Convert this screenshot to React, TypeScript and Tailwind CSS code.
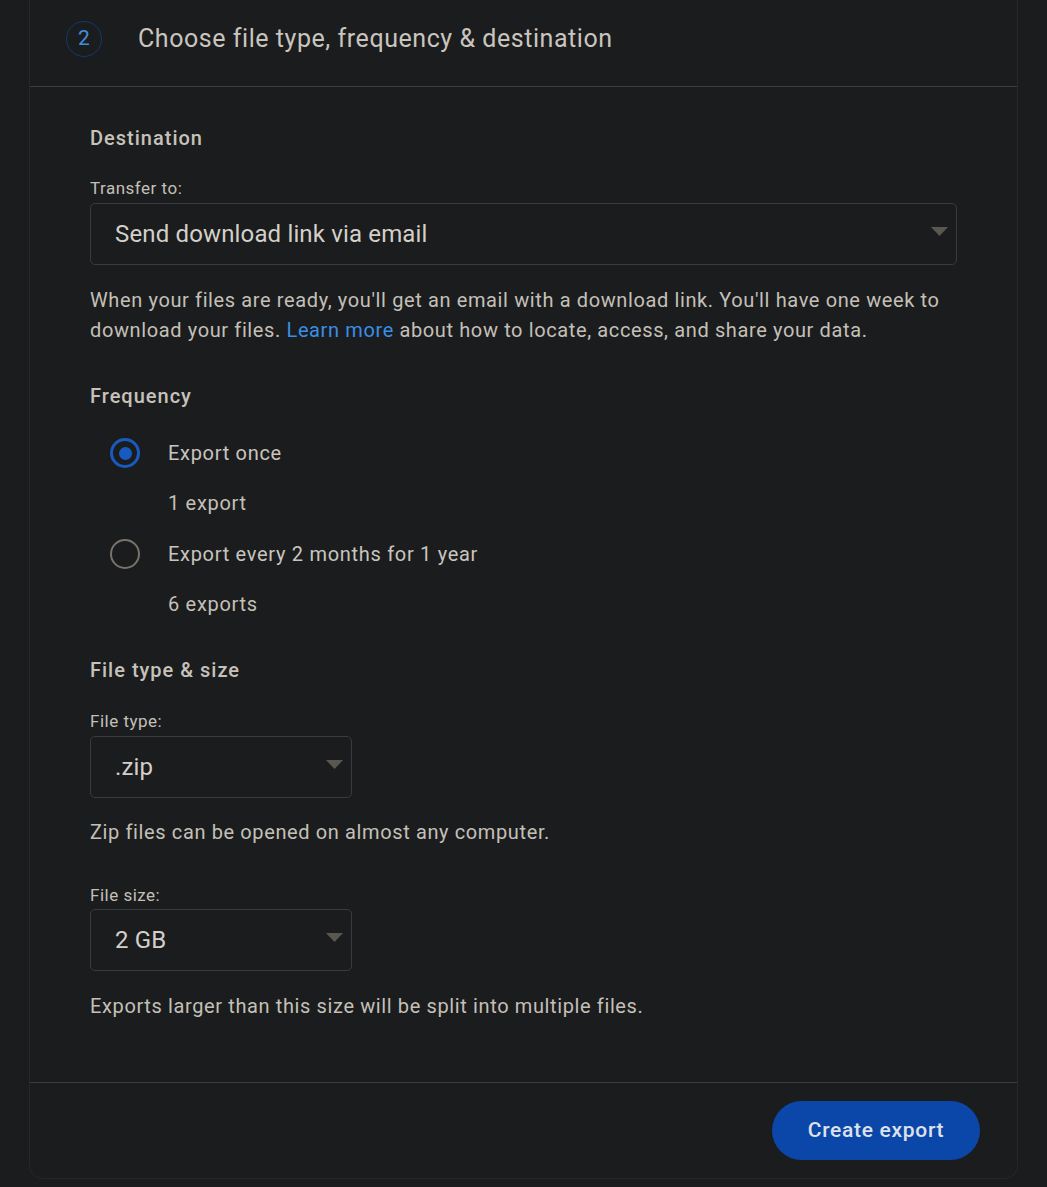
import { ReactNode } from 'react';

const font = { fontFamily: 'Roboto, "Liberation Sans", sans-serif' };

function Caret() {
  return (
    <svg width="17" height="9" viewBox="0 0 17 9" className="shrink-0">
      <path d="M0 0 L17 0 L8.5 9 Z" fill="#5a5750" />
    </svg>
  );
}

function SelectBox({ value, wide }: { value: string; wide?: boolean }) {
  return (
    <div
      className={`flex h-[62px] items-center justify-between rounded-[5px] border border-[#3a3b3e] pl-[24px] pr-[8px] ${
        wide ? 'w-full' : 'w-[262px]'
      }`}
    >
      <span className="text-[24px] tracking-[0.15px] text-[#d4d0c9]">{value}</span>
      <div className="-mt-[6px]">
        <Caret />
      </div>
    </div>
  );
}

function Radio({ checked, label, sub }: { checked?: boolean; label: string; sub: string }) {
  return (
    <div>
      <div className="flex h-[24px] items-center">
        <div className="flex w-[78px] justify-start pl-[20px]">
          {checked ? (
            <div className="flex h-[30px] w-[30px] items-center justify-center rounded-full border-[3px] border-[#185bc0]">
              <div className="h-[13px] w-[13px] rounded-full bg-[#185bc0]" />
            </div>
          ) : (
            <div className="h-[30px] w-[30px] rounded-full border-2 border-[#79736a]" />
          )}
        </div>
        <span className="text-[20px] tracking-[0.7px] text-[#c9c5be]">{label}</span>
      </div>
      <div className="mt-[26px] pl-[78px] text-[20px] leading-[24px] tracking-[0.7px] text-[#c4c0b8]">{sub}</div>
    </div>
  );
}

function Heading({ children, className }: { children: ReactNode; className?: string }) {
  return (
    <h3 className={`text-[20px] font-medium leading-[24px] tracking-[1px] text-[#c6c2ba] ${className ?? ''}`}>{children}</h3>
  );
}

function Label({ children, className }: { children: ReactNode; className?: string }) {
  return <div className={`text-[17px] leading-[20px] tracking-[0.5px] text-[#c4c0b8] ${className ?? ''}`}>{children}</div>;
}

export default function App() {
  return (
    <div className="min-h-[1187px] bg-[#1b1c1e] pb-[9px]" style={font}>
      <div className="mx-[29px] rounded-b-[14px] border-x border-b border-[#26272a] bg-[#1b1c1e]">
        {/* Header */}
        <div className="flex h-[87px] items-start gap-[36px] border-b border-[#3d3d3f] pl-[36px] pt-[21px]">
          <div className="flex h-[36px] w-[36px] items-center justify-center rounded-full border border-[#0f3a70] text-[21px] text-[#3f8fe0]">
            2
          </div>
          <h2 className="pt-[3px] text-[25px] leading-[30px] tracking-[0.55px] text-[#c9c5be]">
            Choose file type, frequency &amp; destination
          </h2>
        </div>

        {/* Body */}
        <div className="px-[60px] pb-[64px] pt-[39px]">
          <Heading>Destination</Heading>
          <Label className="mt-[28px]">Transfer to:</Label>
          <div className="mt-[5px]">
            <SelectBox value="Send download link via email" wide />
          </div>
          <p className="mt-[20px] text-[20px] leading-[30px] tracking-[0.62px] text-[#c4c0b8]">
            When your files are ready, you'll get an email with a download link. You'll have one week to download your
            files. <span className="text-[#3a8ee6]">Learn more</span> about how to locate, access, and share your data.
          </p>

          <Heading className="mt-[39px]">Frequency</Heading>
          <div className="mt-[33px] flex flex-col gap-[27px]">
            <Radio checked label="Export once" sub="1 export" />
            <Radio label="Export every 2 months for 1 year" sub="6 exports" />
          </div>

          <Heading className="mt-[42px]">File type &amp; size</Heading>
          <Label className="mt-[29px]">File type:</Label>
          <div className="mt-[5px]">
            <SelectBox value=".zip" />
          </div>
          <p className="mt-[22px] text-[20px] leading-[24px] tracking-[0.62px] text-[#c4c0b8]">
            Zip files can be opened on almost any computer.
          </p>
          <Label className="mt-[41px]">File size:</Label>
          <div className="mt-[4px]">
            <SelectBox value="2 GB" />
          </div>
          <p className="mt-[23px] text-[20px] leading-[24px] tracking-[0.62px] text-[#c4c0b8]">
            Exports larger than this size will be split into multiple files.
          </p>
        </div>

        {/* Footer */}
        <div className="flex justify-end border-t border-[#3d3d3f] pb-[18px] pr-[37px] pt-[18px]">
          <button className="h-[59px] w-[208px] rounded-full bg-[#0b47a8] text-[21px] font-medium tracking-[0.7px] text-[#dde2ea]">
            Create export
          </button>
        </div>
      </div>
    </div>
  );
}
